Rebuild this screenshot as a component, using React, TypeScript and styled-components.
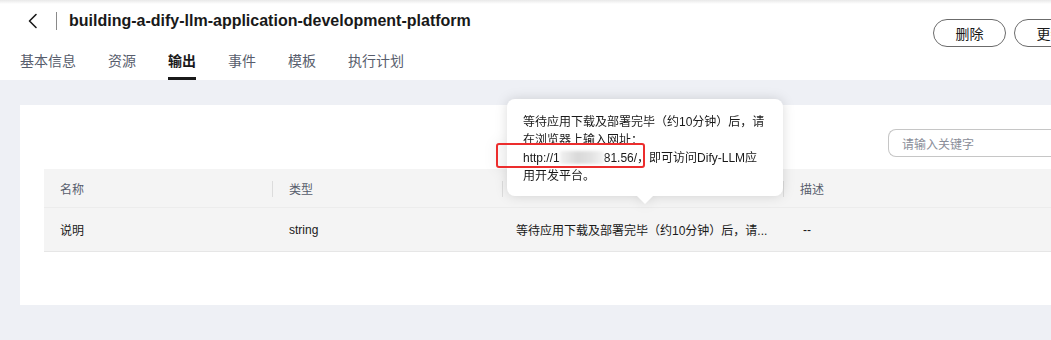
import React from "react";
import styled, { createGlobalStyle } from "styled-components";

const GlobalStyle = createGlobalStyle`
  html, body { margin: 0; padding: 0; }
  body {
    background: #eef0f5;
    overflow: hidden;
    font-family: "Liberation Sans", "Noto Sans CJK SC", Arial, sans-serif;
    color: #191919;
  }
`;

const Page = styled.div`
  width: 1100px;
  height: 340px;
  background: #eef0f5;
`;

const Header = styled.header`
  height: 80px;
  background: linear-gradient(#e9e9e9, #ffffff 4px);
  display: flex;
  justify-content: space-between;
  box-sizing: border-box;
`;

const HeaderLeft = styled.div`
  display: flex;
  flex-direction: column;
`;

const TitleRow = styled.div`
  height: 44px;
  display: flex;
  align-items: center;
  padding-left: 25px;
  padding-bottom: 2px;
  box-sizing: border-box;
`;

const BackButton = styled.button`
  width: 16px;
  height: 16px;
  padding: 0;
  border: none;
  background: none;
  display: flex;
  align-items: center;
  justify-content: center;
  color: #191919;
`;

const Divider = styled.span`
  width: 1px;
  height: 18px;
  background: #8a8a8a;
  margin: 0 12px 0 15px;
`;

const Title = styled.h1`
  margin: 0;
  font-size: 16px;
  font-weight: 700;
  color: #191919;
  font-family: "Liberation Sans", Arial, sans-serif;
`;

const Tabs = styled.nav`
  display: flex;
  gap: 32px;
  padding-left: 20px;
  height: 36px;
`;

const Tab = styled.div<{ $active?: boolean }>`
  font-size: 14px;
  line-height: 20px;
  padding-top: 7px;
  box-sizing: border-box;
  height: 36px;
  color: ${(p) => (p.$active ? "#191919" : "#575d6c")};
  font-weight: ${(p) => (p.$active ? 600 : 400)};
  border-bottom: 3px solid ${(p) => (p.$active ? "#191919" : "transparent")};
`;

const Actions = styled.div`
  display: flex;
  gap: 8px;
  padding: 19px 13px 0 0;
  align-items: flex-start;
`;

const PillButton = styled.button`
  width: 73px;
  height: 28px;
  border: 1px solid #6b6b6b;
  border-radius: 14px;
  background: #fff;
  font-size: 14px;
  color: #191919;
  font-family: "Noto Sans CJK SC", sans-serif;
  padding: 0;
`;

const Main = styled.main`
  padding: 25px 20px 0 20px;
`;

const Card = styled.section`
  position: relative;
  background: #fff;
  height: 200px;
  padding: 24px;
  box-sizing: border-box;
`;

const SearchRow = styled.div`
  display: flex;
  justify-content: flex-end;
  margin-bottom: 12px;
`;

const SearchInput = styled.input`
  width: 168px;
  height: 28px;
  box-sizing: border-box;
  border: 1px solid #c6c6c6;
  border-right: none;
  border-radius: 8px 0 0 8px;
  padding: 0 13px;
  font-size: 12px;
  font-family: "Noto Sans CJK SC", sans-serif;
  outline: none;
  &::placeholder { color: #8a8e99; }
`;

const Table = styled.div`
  display: grid;
  grid-template-columns: 228px 230px 281px 1fr;
  font-size: 12px;
`;

const HeadCell = styled.div<{ $divider?: boolean }>`
  position: relative;
  height: 39px;
  background: #f4f4f4;
  display: flex;
  align-items: center;
  padding-left: ${(p) => (p.$divider ? 17 : 16)}px;
  color: #575d6c;
  border-bottom: 1px solid #ececec;
  box-sizing: border-box;
  &::before {
    content: "";
    display: ${(p) => (p.$divider ? "block" : "none")};
    position: absolute;
    left: 0;
    top: 12px;
    width: 1px;
    height: 16px;
    background: #dcdcdc;
  }
`;

const BodyCell = styled.div<{ $shift?: number }>`
  position: relative;
  height: 44px;
  background: #f4f4f4;
  display: flex;
  align-items: center;
  padding-left: ${(p) => p.$shift ?? 17}px;
  color: #191919;
  border-bottom: 1px solid #e6e6e6;
  box-sizing: border-box;
  white-space: nowrap;
`;

const Tooltip = styled.div`
  position: absolute;
  left: 5px;
  bottom: calc(100% + 12px);
  width: 276px;
  height: 97px;
  box-sizing: border-box;
  padding: 14px 16px 0 16px;
  background: #fff;
  border-radius: 8px;
  filter: drop-shadow(0 0 6px rgba(0, 0, 0, 0.14));
  font-size: 12px;
  line-height: 18px;
  color: #191919;
  &::after {
    content: "";
    position: absolute;
    left: 130px;
    bottom: -8px;
    border-left: 8px solid transparent;
    border-right: 8px solid transparent;
    border-top: 8px solid #fff;
  }
`;

const Line = styled.div`
  white-space: nowrap;
`;

const Blur = styled.span`
  display: inline-block;
  width: 44px;
  height: 13px;
  vertical-align: -2px;
  background: linear-gradient(90deg, #f1f1f1, #d9d9d9 40%, #e2e2e2 70%, #f4f4f4);
  filter: blur(1.5px);
`;

const Highlight = styled.span`
  position: absolute;
  left: -11px;
  top: 44px;
  width: 149px;
  height: 25px;
  box-sizing: border-box;
  border: 2px solid #ec2d2d;
  border-radius: 3px;
`;

const ChevronLeft = () => (
  <svg width="14" height="16" viewBox="0 0 14 16" fill="none">
    <path d="M10 1.5 L3.5 8 L10 14.5" stroke="#191919" strokeWidth="1.6" strokeLinecap="round" strokeLinejoin="round" />
  </svg>
);

const tabs = ["基本信息", "资源", "输出", "事件", "模板", "执行计划"];

export default function App() {
  return (
    <>
      <GlobalStyle />
      <Page>
        <Header>
          <HeaderLeft>
            <TitleRow>
              <BackButton aria-label="back">
                <ChevronLeft />
              </BackButton>
              <Divider />
              <Title>building-a-dify-llm-application-development-platform</Title>
            </TitleRow>
            <Tabs>
              {tabs.map((t) => (
                <Tab key={t} $active={t === "输出"}>
                  {t}
                </Tab>
              ))}
            </Tabs>
          </HeaderLeft>
          <Actions>
            <PillButton>删除</PillButton>
            <PillButton>更新</PillButton>
          </Actions>
        </Header>
        <Main>
          <Card>
            <SearchRow>
              <SearchInput placeholder="请输入关键字" />
            </SearchRow>
            <Table>
              <HeadCell>名称</HeadCell>
              <HeadCell $divider>类型</HeadCell>
              <HeadCell $divider>值</HeadCell>
              <HeadCell $divider>描述</HeadCell>
              <BodyCell $shift={16}>说明</BodyCell>
              <BodyCell>string</BodyCell>
              <BodyCell $shift={14}>
                等待应用下载及部署完毕（约10分钟）后，请...
                <Tooltip>
                  <Line>等待应用下载及部署完毕（约10分钟）后，请</Line>
                  <Line>在浏览器上输入网址：</Line>
                  <Line>
                    http://1<Blur />81.56/，即可访问Dify-LLM应
                  </Line>
                  <Line>用开发平台。</Line>
                  <Highlight />
                </Tooltip>
              </BodyCell>
              <BodyCell $shift={20}>--</BodyCell>
            </Table>
          </Card>
        </Main>
      </Page>
    </>
  );
}
